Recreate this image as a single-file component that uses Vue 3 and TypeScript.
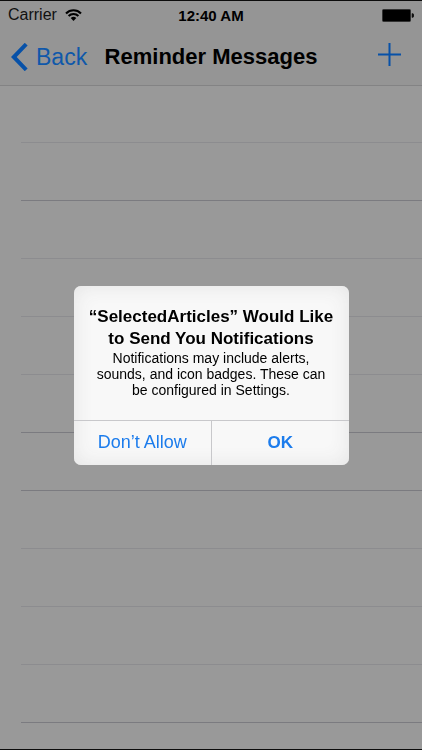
<script setup lang="ts">
import { ref } from 'vue'

const rows = [false, true, false, false, false, true, true, false, false, false, true]
const open = ref(true)
</script>

<template>
  <div class="screen">
    <header class="top">
      <div class="status">
        <div class="carrier">
          <span>Carrier</span>
          <svg class="wifi" viewBox="0 0 17 12" aria-hidden="true">
            <path d="M1 4.4a10.6 10.6 0 0 1 15 0M3.6 7.1a6.9 6.9 0 0 1 9.8 0" fill="none" stroke="#000" stroke-width="2.1" />
            <path d="M5.7 9a4 4 0 0 1 5.6 0L8.5 11.9z" fill="#000" />
          </svg>
        </div>
        <span class="clock">12:40 AM</span>
        <svg class="battery" viewBox="0 0 32 13" aria-hidden="true">
          <rect x="0.5" y="0.5" width="28" height="12" rx="1" fill="#000" stroke="#333" />
          <path d="M30 4.5a2 2 0 0 1 0 4z" fill="#111" stroke="#111" stroke-width="0.6" />
        </svg>
      </div>
      <nav class="bar">
        <a class="back" href="#">
          <svg class="chevron" viewBox="0 0 17 28" aria-hidden="true">
            <path d="M15.2 1.2 2.8 14 15.2 26.8" fill="none" stroke="#0751a8" stroke-width="4" />
          </svg>
          <span>Back</span>
        </a>
        <h1>Reminder Messages</h1>
        <button class="add" type="button" aria-label="Add">
          <svg viewBox="0 0 23 23" aria-hidden="true">
            <path d="M11.5 0v23M0 11.5h23" stroke="#0751a8" stroke-width="2" />
          </svg>
        </button>
      </nav>
    </header>
    <ul class="rows">
      <li v-for="(strong, i) in rows" :key="i" :class="{ strong }"></li>
    </ul>
    <div v-if="open" class="overlay">
      <section class="alert" role="alertdialog" aria-labelledby="alert-title" aria-describedby="alert-text">
        <div class="message">
          <h2 id="alert-title">“SelectedArticles” Would Like<br />to Send You Notifications</h2>
          <p id="alert-text">Notifications may include alerts,<br />sounds, and icon badges. These can<br />be configured in Settings.</p>
        </div>
        <div class="actions">
          <button type="button" @click="open = false">Don’t Allow</button>
          <button type="button" class="ok" @click="open = false">OK</button>
        </div>
      </section>
    </div>
  </div>
</template>

<style>
body {
  background: #999;
}
</style>

<style scoped>
.screen {
  box-sizing: border-box;
  min-height: 100vh;
  display: flex;
  flex-direction: column;
  overflow: hidden;
  border-top: 1px solid #0c0c0c;
  border-bottom: 1px solid #0c0c0c;
  background: #999;
  color: #000;
  font-family: "Liberation Sans", Arial, sans-serif;
}
.top {
  background: #959595;
  border-bottom: 1px solid #838384;
}
.status {
  display: grid;
  grid-template-columns: 1fr auto 1fr;
  align-items: center;
  height: 28px;
  padding: 0 8px;
  font-size: 16px;
}
.carrier {
  display: flex;
  align-items: center;
  gap: 8px;
  color: #111;
}
.wifi {
  width: 17px;
  height: 12px;
}
.clock {
  font-size: 15px;
  font-weight: bold;
}
.battery {
  justify-self: end;
  width: 32px;
  height: 13px;
}
.bar {
  display: grid;
  grid-template-columns: 1fr auto 1fr;
  align-items: center;
  height: 56px;
  padding: 0 11px;
}
.back {
  display: flex;
  align-items: center;
  gap: 8px;
  color: #0f58aa;
  font-size: 23px;
  text-decoration: none;
}
.chevron {
  width: 17px;
  height: 28px;
}
h1 {
  margin: 0;
  font-size: 22px;
  font-weight: bold;
  white-space: nowrap;
}
button {
  margin: 0;
  padding: 0;
  border: 0;
  background: none;
  font-family: inherit;
  cursor: pointer;
}
.add {
  display: flex;
  justify-self: end;
  padding: 0 10px 6px;
}
.add svg {
  width: 23px;
  height: 23px;
}
.rows {
  flex: 1;
  margin: -1px 0 0;
  padding: 0 0 0 21px;
  list-style: none;
}
.rows li {
  box-sizing: border-box;
  height: 58px;
  border-bottom: 1px solid #8c8c8f;
}
.rows .strong {
  border-bottom-color: #7b7b80;
}
.overlay {
  position: fixed;
  inset: 0;
  display: flex;
  align-items: center;
  justify-content: center;
}
.alert {
  width: 275px;
  max-width: 90%;
  overflow: hidden;
  border-radius: 7px;
  background: #f8f8f8;
  box-shadow: inset 0 0 20px #e4e4e4;
  text-align: center;
}
.message {
  padding: 20px 8px 22px;
}
h2 {
  margin: 0;
  font-size: 17px;
  line-height: 22px;
}
p {
  margin: 0;
  font-size: 14px;
  line-height: 16px;
}
.actions {
  display: grid;
  grid-template-columns: 1fr 1fr;
  border-top: 1px solid #c8c8cb;
}
.actions button {
  height: 44px;
  color: #1c7cec;
  font-size: 18px;
}
.actions .ok {
  border-left: 1px solid #c8c8cb;
  font-size: 17px;
  font-weight: bold;
}
</style>
